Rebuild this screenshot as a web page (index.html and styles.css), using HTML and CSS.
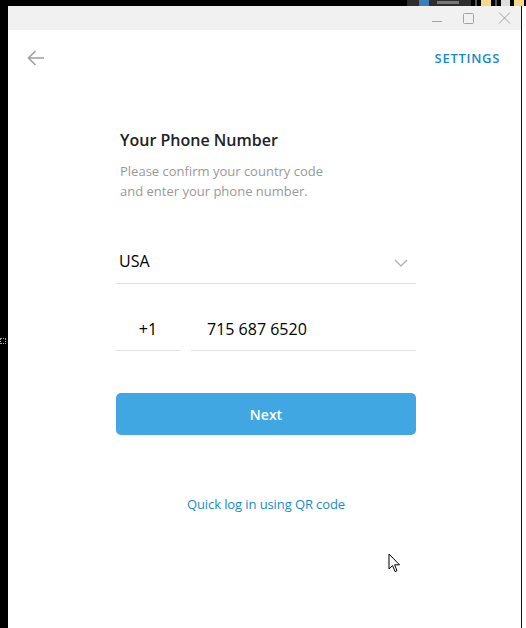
FILE: index.html
```html
<!DOCTYPE html>
<html>
<head>
<meta charset="utf-8">
<link rel="stylesheet" href="styles.css">
</head>
<body>
<div class="screen">
  <div class="taskbar">
    <div class="tb-item"><span class="tb-icon"></span><span class="tb-label"></span></div>
    <span class="tb-sep"></span>
    <span class="tb-yellow"></span>
    <span class="tb-sep"></span>
    <span class="tb-doc"></span>
    <span class="tb-yellow"></span>
  </div>
  <div class="desk">
    <div class="left-edge"><span class="edge-mark"></span></div>
    <div class="window">
      <div class="titlebar">
        <svg class="tbtn" width="46" height="24" viewBox="0 0 46 24"><line x1="30" y1="15.5" x2="40" y2="15.5" stroke="#a3a3a3" stroke-width="1"/></svg>
        <svg class="tbtn" width="36" height="24" viewBox="0 0 36 24"><rect x="15.5" y="7.5" width="10" height="10" rx="1" fill="none" stroke="#a3a3a3" stroke-width="1"/></svg>
        <svg class="tbtn" width="36" height="24" viewBox="0 0 36 24"><path d="M15 6.5 L26 17.5 M26 6.5 L15 17.5" stroke="#a3a3a3" stroke-width="1"/></svg>
      </div>
      <div class="content">
        <div class="header">
          <svg class="back" width="18" height="16" viewBox="0 0 18 16"><path d="M1.5 8 H17 M8.5 1 L1.5 8 L8.5 15" fill="none" stroke="#a0a0a0" stroke-width="1.6"/></svg>
          <span class="settings">SETTINGS</span>
        </div>
        <div class="form">
          <div class="title">Your Phone Number</div>
          <div class="subtitle">Please confirm your country code<br>and enter your phone number.</div>
          <div class="field country">
            <span class="country-name">USA</span>
            <svg class="chev" width="14" height="8" viewBox="0 0 14 8"><path d="M1 1 L7 7 L13 1" fill="none" stroke="#b0b0b0" stroke-width="1.3"/></svg>
          </div>
          <div class="phone-row">
            <div class="field code">+1</div>
            <div class="field number">715 687 6520</div>
          </div>
          <div class="btn">Next</div>
          <div class="qr">Quick log in using QR code</div>
        </div>
        <svg class="cursor" width="14" height="21" viewBox="0 0 14 21"><path d="M1 1 L1 16 L4.5 12.5 L7 18.5 L9 17.7 L6.6 11.8 L11.5 11.8 Z" fill="#fff" stroke="#000" stroke-width="1" stroke-linejoin="miter"/></svg>
      </div>
    </div>
    <div class="right-edge"></div>
  </div>
</div>
</body>
</html>
```
FILE: styles.css
```css
* { box-sizing: border-box; }
html, body { margin: 0; padding: 0; }
body {
  width: 526px;
  height: 628px;
  overflow: hidden;
  background: #000;
  font-family: "Open Sans", "Noto Sans", sans-serif;
}
.screen {
  display: flex;
  flex-direction: column;
  width: 526px;
  height: 628px;
}
.taskbar {
  height: 6px;
  display: flex;
  justify-content: flex-end;
  align-items: flex-start;
  gap: 4px;
  padding-right: 2px;
  overflow: hidden;
}
.tb-item {
  width: 64px;
  height: 6px;
  background: #2e2e2e;
  display: flex;
  gap: 8px;
  padding-left: 12px;
  overflow: hidden;
}
.tb-icon { width: 10px; height: 6px; background: #3c7fb8; }
.tb-label { width: 22px; height: 3px; background: #777; margin-top: 1px; }
.tb-sep { width: 2px; height: 6px; background: #555; }
.tb-yellow { width: 10px; height: 6px; background: #f4d98a; }
.tb-doc { width: 9px; height: 6px; background: #ddd; }
.desk {
  flex: 1;
  display: flex;
}
.left-edge {
  width: 8px;
  background: #000;
  position: relative;
}
.edge-mark {
  position: absolute;
  left: 0;
  top: 332px;
  width: 6px;
  height: 6px;
  border: 1px dotted #9ab;
}
.window {
  width: 513px;
  display: flex;
  flex-direction: column;
  background: #fff;
}
.right-edge {
  width: 5px;
  background: #fff;
  border-left: 1px solid #111;
}
.titlebar {
  height: 24px;
  background: #f1f1f1;
  display: flex;
  justify-content: flex-end;
  padding-right: 1px;
}
.tbtn { display: block; }
.content {
  flex: 1;
  position: relative;
  display: flex;
  flex-direction: column;
}
.header {
  height: 54px;
  display: flex;
  align-items: center;
  justify-content: space-between;
  padding: 0 21px 0 19px;
}
.back { display: block; margin-top: 1px; }
.settings {
  font-size: 13px;
  font-weight: 600;
  color: #168acd;
  letter-spacing: 0.7px;
  margin-top: 1px;
}
.form {
  width: 300px;
  margin-left: 108px;
  margin-top: 44px;
  display: flex;
  flex-direction: column;
}
.title {
  font-size: 16px;
  line-height: 24px;
  font-weight: 600;
  color: #222;
  padding-left: 4px;
}
.subtitle {
  margin-top: 9px;
  font-size: 13px;
  line-height: 20px;
  color: #999;
  padding-left: 4px;
}
.field {
  height: 44px;
  border-bottom: 1px solid #e1e1e1;
  font-size: 16px;
  color: #000;
  display: flex;
  align-items: center;
}
.country {
  margin-top: 39px;
  justify-content: space-between;
  padding: 0 8px 0 3px;
  padding-bottom: 1px;
}
.chev { display: block; margin-top: 4px; }
.phone-row {
  margin-top: 23px;
  display: flex;
  gap: 11px;
}
.code {
  width: 64px;
  justify-content: center;
}
.number {
  flex: 1;
  padding-left: 16px;
}
.btn {
  margin-top: 42px;
  height: 42px;
  border-radius: 5px;
  background: #40a7e3;
  color: #fff;
  font-size: 14px;
  font-weight: 600;
  display: flex;
  align-items: center;
  justify-content: center;
}
.qr {
  margin-top: 59px;
  text-align: center;
  font-size: 13px;
  line-height: 20px;
  color: #168acd;
  letter-spacing: -0.1px;
}
.cursor {
  position: absolute;
  left: 380px;
  top: 523px;
}
```
